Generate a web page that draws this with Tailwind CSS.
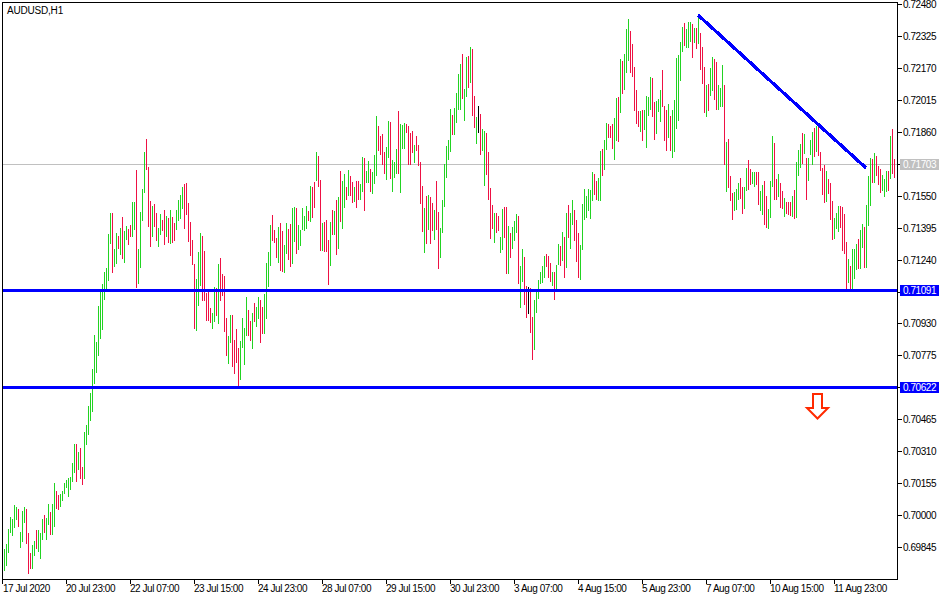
<!DOCTYPE html>
<html lang="en">
<head>
<meta charset="UTF-8">
<title>AUDUSD,H1</title>
<script src="https://cdn.jsdelivr.net/npm/@tailwindcss/browser@4"></script>
</head>
<body class="bg-white">
<div class="w-[950px] h-[600px] bg-white overflow-hidden text-black text-[10px] leading-[11px] tracking-[-0.45px] font-['Liberation_Sans',sans-serif]">

  <div class="flex pl-[2px] pt-[2px]">
    <!-- plot area -->
    <div class="relative w-[896px] h-[578px] border border-black">
      <svg id="chart" class="block" width="894" height="576" viewBox="3 3 894 576"></svg>
      <div class="absolute left-[4px] top-[2px] tracking-[-0.2px]">AUDUSD,H1</div>
    </div>

    <!-- price axis -->
    <div class="relative pt-[2px]">
      <div class="flex flex-col">
        <div class="flex h-[32px]"><div class="w-[4px] h-px bg-black"></div><span class="ml-[1px] -mt-[5px]">0.72480</span></div>
        <div class="flex h-[32px]"><div class="w-[4px] h-px bg-black"></div><span class="ml-[1px] -mt-[5px]">0.72325</span></div>
        <div class="flex h-[32px]"><div class="w-[4px] h-px bg-black"></div><span class="ml-[1px] -mt-[5px]">0.72170</span></div>
        <div class="flex h-[32px]"><div class="w-[4px] h-px bg-black"></div><span class="ml-[1px] -mt-[5px]">0.72015</span></div>
        <div class="flex h-[32px]"><div class="w-[4px] h-px bg-black"></div><span class="ml-[1px] -mt-[5px]">0.71860</span></div>
        <div class="flex h-[32px]"><div class="w-[4px] h-px bg-black"></div></div>
        <div class="flex h-[32px]"><div class="w-[4px] h-px bg-black"></div><span class="ml-[1px] -mt-[5px]">0.71550</span></div>
        <div class="flex h-[32px]"><div class="w-[4px] h-px bg-black"></div><span class="ml-[1px] -mt-[5px]">0.71395</span></div>
        <div class="flex h-[32px]"><div class="w-[4px] h-px bg-black"></div><span class="ml-[1px] -mt-[5px]">0.71240</span></div>
        <div class="flex h-[31px]"><div class="w-[4px] h-px bg-black"></div></div>
        <div class="flex h-[32px]"><div class="w-[4px] h-px bg-black"></div><span class="ml-[1px] -mt-[5px]">0.70930</span></div>
        <div class="flex h-[32px]"><div class="w-[4px] h-px bg-black"></div><span class="ml-[1px] -mt-[5px]">0.70775</span></div>
        <div class="flex h-[32px]"><div class="w-[4px] h-px bg-black"></div></div>
        <div class="flex h-[32px]"><div class="w-[4px] h-px bg-black"></div><span class="ml-[1px] -mt-[5px]">0.70465</span></div>
        <div class="flex h-[32px]"><div class="w-[4px] h-px bg-black"></div><span class="ml-[1px] -mt-[5px]">0.70310</span></div>
        <div class="flex h-[32px]"><div class="w-[4px] h-px bg-black"></div><span class="ml-[1px] -mt-[5px]">0.70155</span></div>
        <div class="flex h-[32px]"><div class="w-[4px] h-px bg-black"></div><span class="ml-[1px] -mt-[5px]">0.70000</span></div>
        <div class="flex h-[32px]"><div class="w-[4px] h-px bg-black"></div><span class="ml-[1px] -mt-[5px]">0.69845</span></div>
      </div>
      <!-- price tags over the axis -->
      <div class="absolute left-[2px] top-[157px] w-[39px] h-[11px] pl-[3px] bg-[#c0c0c0] text-white">0.71703</div>
      <div class="absolute left-[2px] top-[283px] w-[39px] h-[11px] pl-[3px] bg-[#0000ff] text-white">0.71091</div>
      <div class="absolute left-[2px] top-[380px] w-[39px] h-[11px] pl-[3px] bg-[#0000ff] text-white">0.70622</div>
    </div>
  </div>

  <!-- time axis -->
  <div class="flex pl-[2px]">
    <div class="w-[64px] flex flex-col whitespace-nowrap"><div class="w-px h-[4px] bg-black"></div><span class="-mt-[1px] pl-[1px]">17 Jul 2020</span></div>
    <div class="w-[64px] flex flex-col whitespace-nowrap"><div class="w-px h-[4px] bg-black"></div><span class="-mt-[1px]">20 Jul 23:00</span></div>
    <div class="w-[64px] flex flex-col whitespace-nowrap"><div class="w-px h-[4px] bg-black"></div><span class="-mt-[1px]">22 Jul 07:00</span></div>
    <div class="w-[64px] flex flex-col whitespace-nowrap"><div class="w-px h-[4px] bg-black"></div><span class="-mt-[1px]">23 Jul 15:00</span></div>
    <div class="w-[64px] flex flex-col whitespace-nowrap"><div class="w-px h-[4px] bg-black"></div><span class="-mt-[1px]">24 Jul 23:00</span></div>
    <div class="w-[64px] flex flex-col whitespace-nowrap"><div class="w-px h-[4px] bg-black"></div><span class="-mt-[1px]">28 Jul 07:00</span></div>
    <div class="w-[64px] flex flex-col whitespace-nowrap"><div class="w-px h-[4px] bg-black"></div><span class="-mt-[1px]">29 Jul 15:00</span></div>
    <div class="w-[64px] flex flex-col whitespace-nowrap"><div class="w-px h-[4px] bg-black"></div><span class="-mt-[1px]">30 Jul 23:00</span></div>
    <div class="w-[64px] flex flex-col whitespace-nowrap"><div class="w-px h-[4px] bg-black"></div><span class="-mt-[1px]">3 Aug 07:00</span></div>
    <div class="w-[64px] flex flex-col whitespace-nowrap"><div class="w-px h-[4px] bg-black"></div><span class="-mt-[1px]">4 Aug 15:00</span></div>
    <div class="w-[64px] flex flex-col whitespace-nowrap"><div class="w-px h-[4px] bg-black"></div><span class="-mt-[1px]">5 Aug 23:00</span></div>
    <div class="w-[64px] flex flex-col whitespace-nowrap"><div class="w-px h-[4px] bg-black"></div><span class="-mt-[1px]">7 Aug 07:00</span></div>
    <div class="w-[64px] flex flex-col whitespace-nowrap"><div class="w-px h-[4px] bg-black"></div><span class="-mt-[1px]">10 Aug 15:00</span></div>
    <div class="w-[64px] flex flex-col whitespace-nowrap"><div class="w-px h-[4px] bg-black"></div><span class="-mt-[1px]">11 Aug 23:00</span></div>
  </div>
</div>

<script>
// one bar every 2px from x=4: colour (g/r/k), high y, low y
const bars = `
g549,570 g544,565 g529,552 g517,532 g519,535 g505,527 g507,519 r509,526 g532,547 g511,541 g507,522 r509,543
r533,573 r553,568 g545,568 g541,555 r530,548 g530,551 g533,558 g519,539 r515,532 g518,539 g504,524 r512,534
g504,534 g483,526 r491,508 r495,509 g494,506 g491,500 g483,493 g480,487 g478,496 g477,489 g463,481 g444,472
r444,481 g452,469 r448,478 r467,484 g432,478 g425,444 g406,434 g393,420 g369,411 g335,383 g342,372 g306,355
g292,338 g284,329 g272,299 g268,290 g234,280 g213,243 r213,272 g249,266 g233,263 r236,248 g228,254 r217,258
g231,262 g226,239 r229,244 r225,236 g202,236 g202,229 r170,287 g249,283 g212,267 g189,220 g152,192 r139,169
r167,226 r201,246 g206,236 r204,226 r213,240 g228,246 g214,234 r220,230 r210,244 g216,236 r218,242 g210,243
r217,242 r223,240 g210,229 g200,220 g195,218 g187,208 r184,228 r183,214 r203,241 r222,255 r240,264 r264,328
g279,330 g252,305 g233,285 r236,300 r251,300 r293,320 r292,320 r308,322 g313,328 g287,321 r288,315 g264,323
r258,300 r274,295 r276,331 r318,355 g336,363 g315,342 r315,366 r340,373 r329,362 r348,385 g341,379 g318,347
g328,364 g297,335 r310,335 r321,340 g313,348 r303,321 g307,326 g297,318 r300,342 r307,333 g294,333 g263,318
g252,286 g225,265 r215,240 r230,242 r238,257 g227,262 r223,270 r231,271 g245,272 g223,253 r229,259 r224,266
g208,263 g207,241 r208,253 g225,249 g230,245 g208,229 g216,230 g206,228 r211,220 g186,221 r187,217 r182,207
g152,180 r156,186
r180,250 g223,250 r222,251 r220,251 r240,284 g222,265 r210,234 g211,234 r200,254 g197,248 r171,221 g181,228
g174,207 r187,199 g170,195 r176,195 r182,202 g187,201 r181,207 r181,199 g184,199 g157,191 r158,210 g171,182
g161,182 r169,191 g172,193 g155,183 g116,175 r126,150 r136,154 r134,164 r152,173 g147,179 g121,157 r122,178
g160,191 g162,177 g149,173 r111,173 g124,192 g125,148 g123,148 r124,132 r126,164 r133,164 r131,152 g145,162
r136,150 r145,165 r162,203 r186,231 g208,252 r196,243 g195,229 r197,243 r203,230 g210,239 r181,229 r212,268
g228,257 g200,232 g164,206 g146,177 g140,159 g109,151 r115,134 g108,134 g93,122 g74,109 g64,109 r54,98
g89,120 g57,96 r56,87 g47,82 r49,115 r96,127 g117,143 k106,132 r114,154 g129,150 g131,185 r133,174 r152,199
r188,238 r205,228 g213,242 r213,232 r216,230 g237,252 g209,249 r207,237 r207,273 g226,273 r233,257 g227,248
g221,240 g214,232 r216,283 g266,307 g249,281 r257,304 r286,317 k287,313 r288,332 r317,359 g300,349 g290,312
g280,298 g272,283 g266,282 g256,277 r254,266 r256,277 r263,281 g272,285 r272,299 g265,288 g244,264 r246,265
g232,260 r237,277 g213,267 r205,237 g213,248 g200,224 r210,240 r220,261 r233,277 g245,279 g204,249 g189,219
g196,217 g189,210 g190,218 g172,200 r174,194 r181,199 g178,200 g151,200 r149,175 g140,169 g123,149 r124,137
r126,137 r124,148 g118,159 g98,140 r97,141 g59,112 r61,93 g54,89 g29,72 g19,60 r31,72 r44,76 r67,110 r90,123
r111,126
g111,131 r110,140 g110,129 g96,147 g97,115 g77,109 r78,116 r102,139 g101,133 g99,111 g90,121 r70,106 r106,140
r110,150 g104,137 r116,150 g110,157 g100,151 g58,128 g55,120 g42,80 g27,51 r23,45 g29,47 g22,47 g22,41 r24,57
g28,42 r28,48 g16,43 r33,69 r47,83 r67,112 g85,116 r84,110 g68,95 g57,90 r59,99 r62,109 g85,109 g88,106 g65,106
r85,164 g142,191 r139,187 r176,200 r193,219 g192,210 g189,209 g183,199 r178,198 r187,213 g187,208 g168,190
r160,189 r169,184 g172,183 g172,186 r172,184 r172,204 g191,210 g185,214 r181,224 r196,227 g209,228 g181,217
g136,186 r143,199 r179,199 g174,196 r183,207 r191,208 g198,216 r202,213 r202,214 r202,215 g196,216 r190,218
g162,217 g150,175 g144,167 r133,163 g134,153 r158,199 g158,180 g140,154 g132,164 r128,156 g126,151 r125,155
r152,170 r168,194 r165,202 g171,201 r179,193 r183,219 r201,239 g218,238 g213,228 g206,231 r206,227 r207,250
r214,253 r242,288 g259,282 r266,288 g249,288 g249,278 g244,269 r239,268 g230,268 g224,247 r227,267 g205,267
g176,225 g158,205 r159,182 g153,182 r156,175 r166,184 r169,192 g175,190 g179,196 g171,191 r171,190 g136,178
r129,173 r159,177
`.trim().split(/\s+/);

const colours = { g: '#22d322', r: '#ee1144', k: '#000000' };
const paths = { g: '', r: '', k: '' };
bars.forEach((bar, i) => {
  const [high, low] = bar.slice(1).split(',');
  paths[bar[0]] += `M${4 + i * 2 + 0.5} ${high}V${+low + 1}`;
});

let svg = `<path d="M3 164.5H897" stroke="#c0c0c0" fill="none" shape-rendering="crispEdges"/>`;
for (const c in paths) {
  svg += `<path d="${paths[c]}" stroke="${colours[c]}" fill="none" shape-rendering="crispEdges"/>`;
}
// horizontal levels and trend line
svg += `<path d="M3 290.5H897M3 387.5H897" stroke="#0000ff" stroke-width="3" fill="none" shape-rendering="crispEdges"/>`;
svg += `<path d="M698 15L866 168" stroke="#0000ff" stroke-width="3.3" fill="none" shape-rendering="crispEdges"/>`;
// down arrow
svg += `<path d="M813 394H822V408H828L817.5 418.5L807 408H813Z" stroke="#ff2a00" stroke-width="2" fill="#ffffff"/>`;
document.getElementById('chart').innerHTML = svg;
</script>
</body>
</html>
